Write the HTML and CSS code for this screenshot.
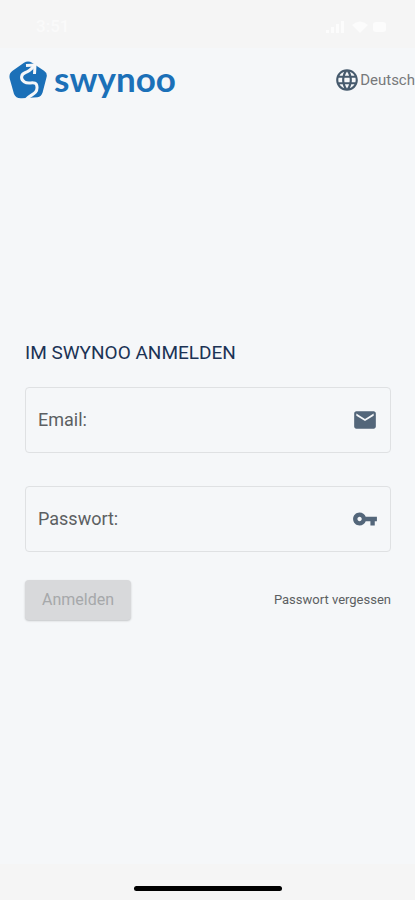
FILE: index.html
```html
<!DOCTYPE html>
<html lang="de">
<head>
<meta charset="utf-8">
<meta name="viewport" content="width=device-width, initial-scale=1">
<title>swynoo</title>
<link rel="stylesheet" href="styles.css">
</head>
<body>
<div class="status">
  <span class="time">3:51</span>
  <svg class="signals" viewBox="0 0 74 16" width="74" height="16" aria-hidden="true">
    <path d="M1 12h3v3H1zM6 9h3v6H6zM11 6h3v9h-3zM16 3h3v12h-3z"/>
    <path d="M27 7q8-7 16 0l-8 8z"/>
    <rect x="48" y="4" width="13" height="10" rx="3"/>
  </svg>
</div>
<header class="header">
  <a class="brand" href="#">
    <svg class="mark" viewBox="0 0 38 38" width="38" height="38" aria-hidden="true">
      <path class="badge" d="M15 1.8Q19 -.8 23 1.8L35 9.8Q38.600 12.200 37.600 16L33.600 31.500Q32.400 35.600 28.500 36.300L13 37.200Q7 37.800 5 33L.8 18Q-.6 12.600 3.600 9.800Z"/>
      <path class="road" d="M17 38.500C22 33 28.500 33 28 26C27.500 18.500 20 24 15.500 21C11 18 12 13 16.500 11.500C20 10.500 22 8.500 25 5"/>
      <path class="arrow" d="M17 4.500L26 4L25.500 13"/>
    </svg>
    <span class="wordmark">swynoo</span>
  </a>
  <button class="language" type="button">
    <svg viewBox="0 0 24 24" width="26" height="26" aria-hidden="true">
      <path d="M11.990 2C6.470 2 2 6.480 2 12s4.470 10 9.990 10C17.520 22 22 17.520 22 12S17.520 2 11.990 2zm6.930 6h-2.950c-.32-1.250-.78-2.450-1.380-3.560 1.840.63 3.370 1.910 4.330 3.560zM12 4.040c.83 1.200 1.480 2.530 1.910 3.960h-3.820c.43-1.430 1.080-2.760 1.910-3.960zM4.260 14C4.100 13.360 4 12.690 4 12s.1-1.360.26-2h3.380c-.08.66-.14 1.320-.14 2s.06 1.340.14 2H4.260zm.82 2h2.950c.32 1.250.78 2.450 1.380 3.560-1.840-.63-3.370-1.900-4.330-3.560zm2.950-8H5.080c.96-1.660 2.490-2.930 4.330-3.560C8.810 5.550 8.350 6.750 8.030 8zM12 19.960c-.83-1.200-1.480-2.530-1.910-3.960h3.820c-.43 1.430-1.080 2.760-1.910 3.960zM14.340 14H9.660c-.09-.66-.16-1.320-.16-2s.07-1.350.16-2h4.680c.09.65.16 1.320.16 2s-.07 1.340-.16 2zm.25 5.560c.6-1.110 1.060-2.310 1.380-3.560h2.950c-.96 1.650-2.490 2.930-4.330 3.560zM16.360 14c.08-.66.14-1.320.14-2s-.06-1.340-.14-2h3.380c.16.64.26 1.310.26 2s-.1 1.360-.26 2h-3.380z"/>
    </svg>
    <span>Deutsch</span>
  </button>
</header>
<main class="main">
  <form class="login">
    <h1 class="title">IM SWYNOO ANMELDEN</h1>
    <div class="fields">
      <div class="field">
        <label for="email">Email:</label>
        <input id="email" type="email">
        <svg viewBox="0 0 24 24" width="26" height="26" aria-hidden="true">
          <path d="M20 4H4c-1.100 0-1.990.9-1.990 2L2 18c0 1.100.9 2 2 2h16c1.100 0 2-.9 2-2V6c0-1.100-.9-2-2-2zm0 4l-8 5-8-5V6l8 5 8-5v2z"/>
        </svg>
      </div>
      <div class="field">
        <label for="password">Passwort:</label>
        <input id="password" type="password">
        <svg viewBox="0 0 24 24" width="26" height="26" aria-hidden="true">
          <path d="M12.650 10C11.830 7.670 9.610 6 7 6c-3.310 0-6 2.690-6 6s2.690 6 6 6c2.610 0 4.830-1.670 5.650-4H17v4h4v-4h2v-4H12.650zM7 14c-1.100 0-2-.9-2-2s.9-2 2-2 2 .9 2 2-.9 2-2 2z"/>
        </svg>
      </div>
    </div>
    <div class="actions">
      <button class="submit" type="submit" disabled>Anmelden</button>
      <a class="forgot" href="#">Passwort vergessen</a>
    </div>
  </form>
</main>
<footer class="home"><div class="home-bar"></div></footer>
</body>
</html>
```
FILE: styles.css
```css
* {
  box-sizing: border-box;
}

body {
  margin: 0;
  min-height: 100vh;
  display: flex;
  flex-direction: column;
  background: #f5f7f9;
  color: #5c5f62;
  font-family: Roboto, "Liberation Sans", sans-serif;
  overflow-x: hidden;
}

.status {
  height: 48px;
  padding: 4px 16px 0 36px;
  display: flex;
  align-items: center;
  justify-content: space-between;
  background: #f5f5f5;
  color: #fafafa;
}

.time {
  font-size: 17px;
  font-weight: 500;
}

.signals {
  fill: #fcfcfc;
}

.header {
  height: 64px;
  padding-left: 9px;
  display: flex;
  align-items: center;
  justify-content: space-between;
}

.brand {
  display: flex;
  align-items: center;
  gap: 7px;
  color: #1b70b8;
  text-decoration: none;
}

.badge {
  fill: #1b70b8;
}

.road,
.arrow {
  fill: none;
  stroke: #f5f7f9;
  stroke-width: 3;
}

.wordmark {
  padding-bottom: 4px;
  font-family: Lato, sans-serif;
  font-size: 35px;
  font-weight: 700;
  line-height: 36px;
}

.language {
  display: flex;
  align-items: center;
  padding: 0;
  border: 0;
  background: none;
  color: #77797b;
  font-family: inherit;
  font-size: 15px;
}

.language svg {
  fill: #465a6d;
}

.main {
  flex: 1;
  display: flex;
  flex-direction: column;
  justify-content: center;
  padding: 0 24px 16px 25px;
}

.login {
  display: flex;
  flex-direction: column;
}

.title {
  margin: 0 0 22px;
  color: #1b3355;
  font-size: 19px;
  font-weight: 400;
  line-height: 24px;
}

.fields {
  display: flex;
  flex-direction: column;
  gap: 33px;
  margin-bottom: 28px;
}

.field {
  height: 66px;
  padding: 0 12px;
  display: flex;
  align-items: center;
  gap: 8px;
  border: 1px solid #dfe1e3;
  border-radius: 4px;
  font-size: 18px;
}

.field input {
  flex: 1;
  min-width: 0;
  border: 0;
  outline: 0;
  background: none;
  font: inherit;
}

.field svg {
  fill: #53667a;
}

.actions {
  display: flex;
  align-items: center;
  justify-content: space-between;
}

.submit {
  height: 40px;
  padding: 0 17px;
  border: 0;
  border-radius: 4px;
  background: #d8d9db;
  box-shadow: 0 1px 2px #c4c6c8;
  color: #a6a8aa;
  font-family: inherit;
  font-size: 16px;
}

.forgot {
  color: #5c5f62;
  font-size: 13px;
  text-decoration: none;
}

.home {
  height: 36px;
  padding-top: 22px;
  background: #f5f5f5;
}

.home-bar {
  width: 148px;
  height: 5px;
  margin: 0 auto;
  border-radius: 3px;
  background: #000;
}
```
